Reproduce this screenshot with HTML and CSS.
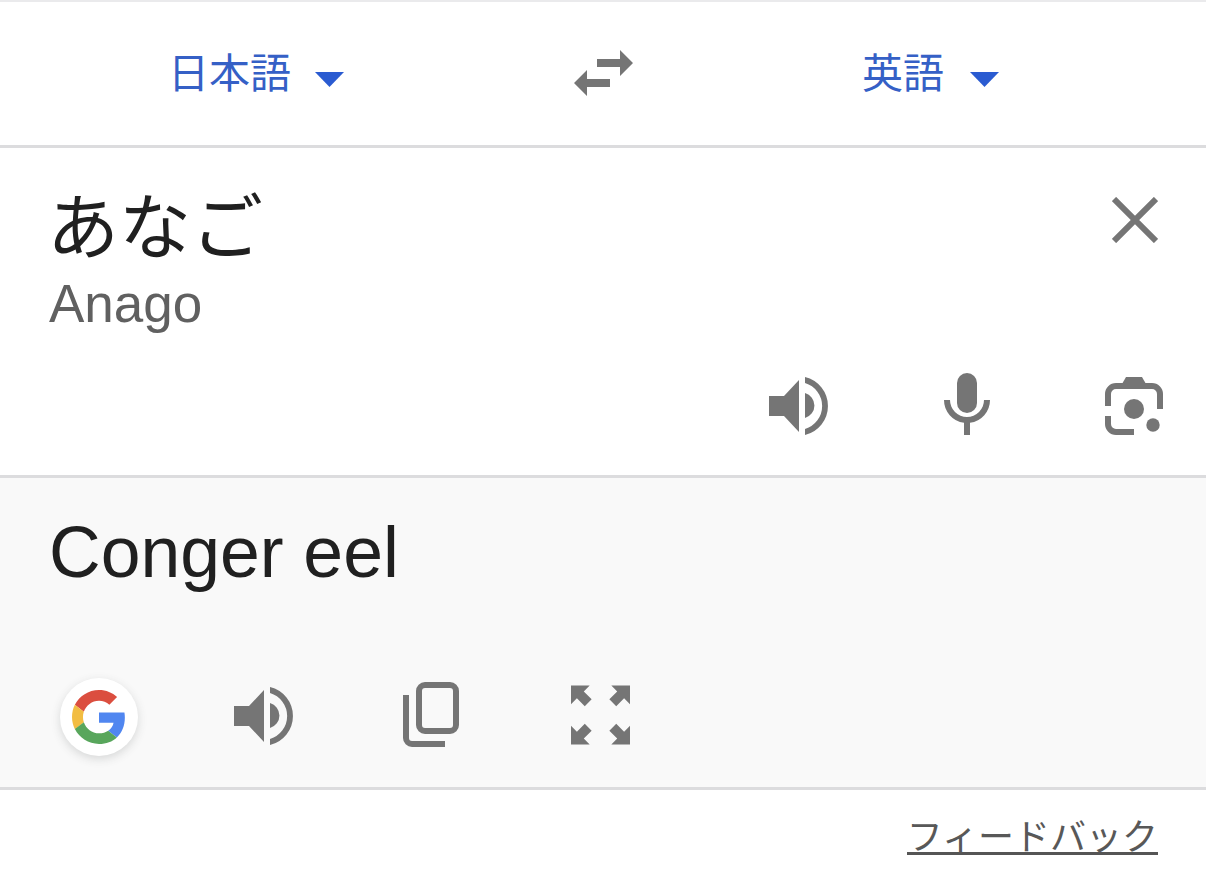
FILE: index.html
```html
<!DOCTYPE html>
<html lang="ja">
<head>
<meta charset="utf-8">
<title>Google 翻訳</title>
<link rel="stylesheet" href="styles.css">
</head>
<body>
<div class="page">
  <header class="langbar">
    <div class="lang">
      <span class="lang-name">日本語</span>
      <svg class="caret" width="29" height="15" viewBox="0 0 29 15"><path d="M0 0H29L14.5 15Z"/></svg>
    </div>
    <svg class="swap" width="59" height="46" viewBox="0 0 59 46"><path d="M23 9H46V0L59 13L46 26V17H23Z M36 37H13V46L0 33L13 20V29H36Z"/></svg>
    <div class="lang lang-target">
      <span class="lang-name">英語</span>
      <svg class="caret" width="29" height="15" viewBox="0 0 29 15"><path d="M0 0H29L14.5 15Z"/></svg>
    </div>
  </header>

  <section class="source">
    <div class="source-head">
      <div class="source-text">
        <div class="source-main">あなご</div>
        <div class="source-roman">Anago</div>
      </div>
      <svg class="clear" width="46" height="46" viewBox="0 0 46 46"><path d="M2 2L44 44M44 2L2 44"/></svg>
    </div>
    <div class="source-tools">
      <svg class="icon" width="60" height="63" viewBox="0 0 60 63"><path d="M0 23H15L30 7V59L15 43H0Z M36 20A13 13 0 0 1 36 45Z M36 4A29.8 29.8 0 0 1 36 62V56A24 24 0 0 0 36 10Z"/></svg>
      <svg class="icon" width="46" height="63" viewBox="0 0 46 63"><rect x="13" y="0" width="20" height="40" rx="10"/><path d="M0 27H6A17 17 0 0 0 40 27H46A23 23 0 0 1 26 49.8V62H20V49.8A23 23 0 0 1 0 27Z"/></svg>
      <svg class="icon" width="59" height="63" viewBox="0 0 59 63"><path d="M21 4H37L41 11H17Z"/><path class="frame" d="M3 33V21A8 8 0 0 1 11 13H47A8 8 0 0 1 55 21V36M3 43V51A8 8 0 0 0 11 59H29"/><circle cx="29" cy="36" r="10"/><circle cx="48" cy="52" r="6.7"/></svg>
    </div>
  </section>

  <section class="result">
    <div class="result-text">Conger eel</div>
    <div class="result-tools">
      <div class="gbtn">
        <svg width="54" height="54" viewBox="0 0 48 48"><path fill="#DB4E3F" d="M24 9.5c3.54 0 6.71 1.22 9.21 3.6l6.85-6.85C35.9 2.38 30.47 0 24 0 14.62 0 6.51 5.38 2.56 13.22l7.98 6.19C12.43 13.72 17.74 9.5 24 9.5z"/><path fill="#5086F0" d="M46.98 24.55c0-1.57-.15-3.09-.38-4.55H24v9.02h12.94c-.58 2.96-2.26 5.48-4.78 7.18l7.73 6c4.51-4.18 7.09-10.36 7.09-17.65z"/><path fill="#F2BD42" d="M10.53 28.59c-.5-1.45-.79-2.99-.79-4.59s.27-3.14.76-4.59l-7.98-6.19C.92 16.46 0 20.12 0 24c0 3.88.92 7.54 2.56 10.78l7.97-6.19z"/><path fill="#58A65C" d="M24 48c6.48 0 11.93-2.13 15.89-5.81l-7.73-6c-2.15 1.45-4.92 2.3-8.16 2.3-6.26 0-11.57-4.22-13.47-9.91l-7.98 6.19C6.51 42.62 14.62 48 24 48z"/></svg>
      </div>
      <svg class="icon tool-speak" width="60" height="63" viewBox="0 0 60 63"><path d="M0 23H15L30 7V59L15 43H0Z M36 20A13 13 0 0 1 36 45Z M36 4A29.8 29.8 0 0 1 36 62V56A24 24 0 0 0 36 10Z"/></svg>
      <svg class="icon tool-copy" width="56" height="65" viewBox="0 0 56 65"><rect class="frame" x="16" y="3" width="37" height="46" rx="6"/><path class="frame" d="M3 13V56A6 6 0 0 0 9 62H42"/></svg>
      <svg class="icon tool-expand" width="59" height="60" viewBox="0 0 60 60"><path d="M0 0H19L13 6L21 14L14 21L6 13L0 19Z"/><path d="M60 0H41L47 6L39 14L46 21L54 13L60 19Z"/><path d="M0 60H19L13 54L21 46L14 39L6 47L0 41Z"/><path d="M60 60H41L47 54L39 46L46 39L54 47L60 41Z"/></svg>
    </div>
  </section>

  <footer class="foot">
    <a class="feedback" href="#">フィードバック</a>
  </footer>
</div>
</body>
</html>
```

FILE: styles.css
```css
* { box-sizing: border-box; }
html, body { margin: 0; padding: 0; background: #fff; }
body { font-family: "Liberation Sans", "Noto Sans CJK JP", sans-serif; overflow: hidden; }
.page { width: 1206px; height: 879px; border-top: 2px solid #eaeaec; }
svg { display: block; flex: none; }

.langbar {
  height: 146px;
  border-bottom: 3px solid #dcdcde;
  display: flex;
  align-items: center;
  padding: 0 0 1px 168px;
  gap: 229px;
}
.lang { display: flex; align-items: center; gap: 24px; color: #3560c6; }
.lang-target { gap: 26px; }
.lang-name { font: 41px/50px "Noto Sans CJK JP", sans-serif; margin-top: -7px; }
.caret { fill: #2a5bd1; margin-top: 12px; }
.swap { fill: #757575; margin-left: 1px; }

.source { height: 330px; border-bottom: 3px solid #dcdcde; padding: 34px 42px 0 49px; }
.source-head { display: flex; justify-content: space-between; align-items: flex-start; height: 191px; }
.source-main { font: 72px/80px "Noto Sans CJK JP", sans-serif; color: #202020; margin-left: -2px; }
.source-roman { font: 400 53px/60px "Liberation Sans", sans-serif; color: #606060; margin-top: 12px; }
.clear { fill: none; stroke: #757575; stroke-width: 6; margin: 15px 6px 0 0; }
.source-tools { display: flex; justify-content: flex-end; gap: 115px; }

.icon { fill: #757575; }
.frame { fill: none; stroke: #757575; stroke-width: 6; }

.result { height: 312px; border-bottom: 3px solid #dcdcde; background: #f9f9f9; padding: 30px 0 0 49px; }
.result-text { font: 400 71.5px/88px "Liberation Sans", sans-serif; color: #202020; height: 174px; }
.result-tools { display: flex; align-items: center; padding-left: 11px; height: 65px; }
.gbtn {
  width: 78px; height: 78px; border-radius: 50%; background: #fff;
  display: flex; align-items: center; justify-content: center; flex: none;
  box-shadow: 0 3px 10px rgba(60, 64, 67, .18);
  margin-top: 5px;
}
.tool-speak { margin-left: 96px; }
.tool-copy { margin-left: 109px; }
.tool-expand { margin-left: 112px; }

.foot { display: flex; justify-content: flex-end; padding: 26px 48px 0 0; }
.feedback {
  font: 36px/36px "Noto Sans CJK JP", sans-serif;
  color: #585858;
  text-decoration: none;
  border-bottom: 3px solid #555;
}
```
